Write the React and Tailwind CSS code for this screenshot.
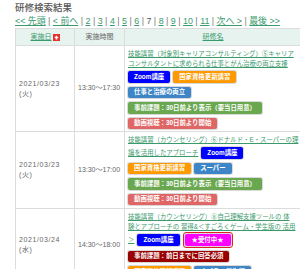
const font = { fontFamily: '"Liberation Sans", "Noto Sans CJK JP", sans-serif' };

const Badge = ({ c, children }) => (
  <span
    className={`inline-flex h-[11.5px] items-center whitespace-nowrap rounded-[2px] px-[6px] text-[6.4px] font-bold leading-none text-white ring-1 ring-black/15 ${c}`}
  >
    {children}
  </span>
);

const Zoom = () => <Badge c="bg-[#0000ff]">Zoom講座</Badge>;
const Kokka = () => <Badge c="bg-[#ff9900]">国家資格更新講習</Badge>;

const Row = ({ children, className = "mt-[4px]" }) => (
  <div className={`flex items-center gap-[3px] ${className}`}>{children}</div>
);

const Title = ({ children }) => (
  <span className="text-[#3a9a6c] underline decoration-[0.5px] underline-offset-[1px]">{children}</span>
);

const pages = ["2", "3", "4", "5", "6", "7", "8", "9", "10", "11"];

const DateCell = ({ date, day }) => (
  <div className="flex flex-col justify-center border-b border-r border-[#dcdcdc] pl-[3px] text-[7px] leading-[10px] tracking-[0.6px] text-[#666]">
    <span>{date}</span>
    <span>({day})</span>
  </div>
);

const TimeCell = ({ time }) => (
  <div className="flex items-center border-b border-r border-[#dcdcdc] pl-[3px] text-[7px] text-[#666]">
    {time}
  </div>
);

export default function App() {
  return (
    <div className="h-[269px] w-[300px] overflow-hidden bg-white pl-[15px]" style={font}>
      <h1 className="pt-[2px] text-[9.5px] font-medium leading-[12px] text-[#555]">研修検索結果</h1>

      <div className="mt-[2px] flex items-center whitespace-pre text-[8.9px] leading-[11px] text-[#777]">
        <a className="text-[#3a9a6c] underline">{"<< 先頭"}</a>
        <span>{" | "}</span>
        <a className="text-[#3a9a6c] underline">{"< 前へ"}</a>
        {pages.map((p) => (
          <span key={p} className="flex">
            <span>{" | "}</span>
            {p === "7" ? (
              <span className="text-[#555]">{p}</span>
            ) : (
              <a className="text-[#3a9a6c] underline">{p}</a>
            )}
          </span>
        ))}
        <span>{" | "}</span>
        <a className="text-[#3a9a6c] underline">{"次へ >"}</a>
        <span>{" | "}</span>
        <a className="text-[#3a9a6c] underline">{"最後 >>"}</a>
      </div>

      <div className="mt-[1px] grid w-[286px] grid-cols-[59px_50px_177px] border-l border-t border-[#dcdcdc]">
        {/* header */}
        <div className="flex h-[17px] items-center justify-center gap-[1px] border-b border-r border-[#dcdcdc] bg-[#e6f3ef] text-[7px]">
          <span className="text-[#3a9a6c] underline">実施日</span>
          <svg width="7" height="7" viewBox="0 0 7 7">
            <rect width="7" height="7" fill="#e8302c" />
            <path d="M3.5 1.5 L5.7 4 H4.4 V5.6 H2.6 V4 H1.3 Z" fill="#fff" />
          </svg>
        </div>
        <div className="flex h-[17px] items-center justify-center border-b border-r border-[#dcdcdc] bg-[#e6f3ef] text-[7px] text-[#666]">
          実施時間
        </div>
        <div className="flex h-[17px] items-center justify-center border-b border-r border-[#dcdcdc] bg-[#e6f3ef] text-[7px]">
          <span className="text-[#3a9a6c] underline">研修名</span>
        </div>

        {/* row 1 */}
        <DateCell date="2021/03/23" day="火" />
        <TimeCell time="13:30〜17:30" />
        <div className="border-b border-r border-[#dcdcdc] px-[3px] pb-[2px] pt-[3px] text-[6.4px] leading-[10px]">
          <div className="whitespace-nowrap">
            <Title>
              技能講習（対象別キャリアコンサルティング）⑤キャリア
              <br />
              コンサルタントに求められる仕事とがん治療の両立支援
            </Title>
          </div>
          <Row className="mt-[2px]">
            <Zoom />
            <Kokka />
          </Row>
          <Row>
            <Badge c="bg-[#3d85c6]">仕事と治療の両立</Badge>
          </Row>
          <Row>
            <Badge c="bg-[#6aa84f]">事前課題：30日前より表示（要当日用意）</Badge>
          </Row>
          <Row>
            <Badge c="bg-[#e06666]">動画視聴：30日前より開始</Badge>
          </Row>
        </div>

        {/* row 2 */}
        <DateCell date="2021/03/23" day="火" />
        <TimeCell time="13:30〜17:00" />
        <div className="border-b border-r border-[#dcdcdc] px-[3px] pb-[3px] pt-[3px] text-[6.4px] leading-[10px]">
          <div className="whitespace-nowrap">
            <Title>技能講習（カウンセリング）⑥ドナルド・E・スーパーの理</Title>
          </div>
          <Row className="mt-[2px] h-[11.5px] gap-[1.5px]">
            <Title>論を活用したアプローチ</Title>
            <Zoom />
          </Row>
          <Row>
            <Kokka />
            <Badge c="bg-[#3d85c6]">スーパー</Badge>
          </Row>
          <Row>
            <Badge c="bg-[#6aa84f]">事前課題：30日前より表示（要当日用意）</Badge>
          </Row>
          <Row>
            <Badge c="bg-[#e06666]">動画視聴：30日前より開始</Badge>
          </Row>
        </div>

        {/* row 3 */}
        <DateCell date="2021/03/24" day="水" />
        <TimeCell time="14:30〜18:00" />
        <div className="border-b border-r border-[#dcdcdc] px-[3px] pb-[3px] pt-[3px] text-[6.4px] leading-[10px]">
          <div className="whitespace-nowrap">
            <Title>
              技能講習（カウンセリング）⑧自己理解支援ツールの 体
              <br />
              験とアプローチの 習得&＜すごろくゲーム・学生版の 活用
            </Title>
          </div>
          <Row className="mt-0 gap-[1.5px]">
            <Title>＞</Title>
            <Zoom />
            <span className="inline-flex rounded-[3px] border-[1.5px] border-[#e02424] p-[1px]">
              <Badge c="bg-[#ff00ff] px-[7px]">★受付中★</Badge>
            </span>
          </Row>
          <Row className="mt-[3px]">
            <Badge c="bg-[#990000]">事前課題：前日までに回答必須</Badge>
          </Row>
          <Row>
            <Kokka />
            <Badge c="bg-[#3d85c6]">すごろく学生版</Badge>
          </Row>
        </div>
      </div>
    </div>
  );
}
